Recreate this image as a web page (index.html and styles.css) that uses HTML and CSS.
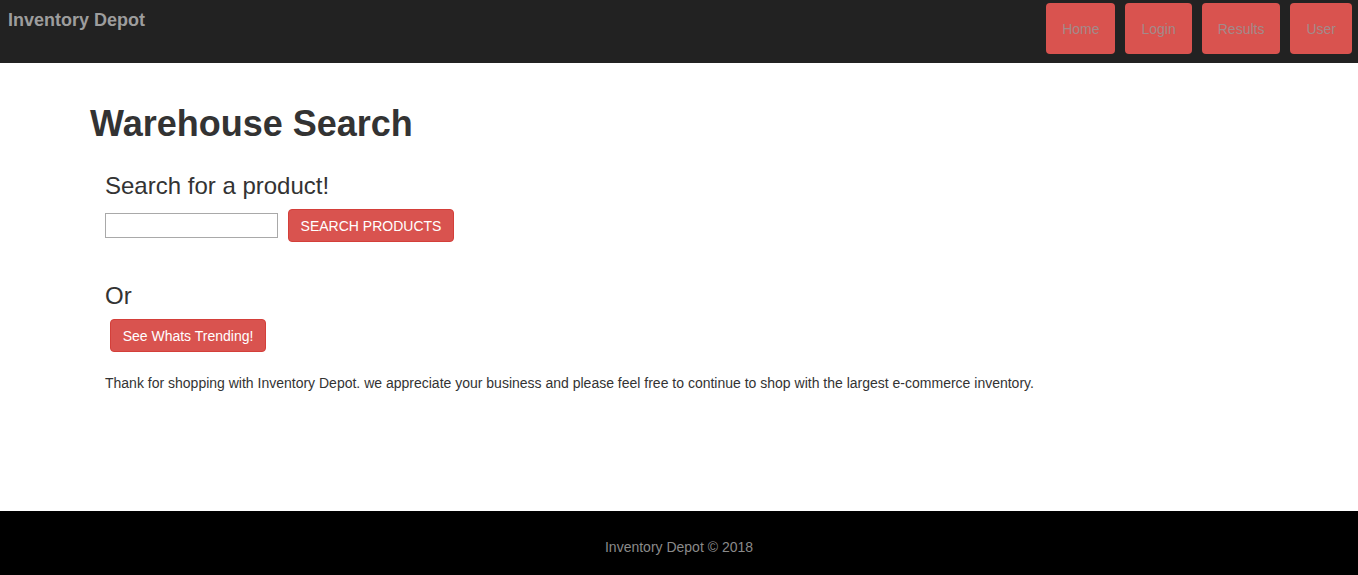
FILE: index.html
```html
<!DOCTYPE html>
<html>
<head>
<meta charset="utf-8">
<title>Inventory Depot</title>
<link rel="stylesheet" href="styles.css">
</head>
<body>
<header class="navbar">
  <a class="brand" href="#">Inventory Depot</a>
  <nav class="nav">
    <a class="nav-btn" href="#">Home</a>
    <a class="nav-btn" href="#">Login</a>
    <a class="nav-btn" href="#">Results</a>
    <a class="nav-btn" href="#">User</a>
  </nav>
</header>
<main class="main">
  <h1 class="title">Warehouse Search</h1>
  <section class="panel">
    <h3 class="sub">Search for a product!</h3>
    <div class="search-row">
      <input class="search-input" type="text">
      <button class="btn btn-upper">Search Products</button>
    </div>
    <h3 class="sub or">Or</h3>
    <button class="btn trend">See Whats Trending!</button>
    <p class="note">Thank for shopping with Inventory Depot. we appreciate your business and please feel free to continue to shop with the largest e-commerce inventory.</p>
  </section>
</main>
<footer class="footer">Inventory Depot © 2018</footer>
</body>
</html>
```

FILE: styles.css
```css
* { box-sizing: border-box; }
html, body { margin: 0; padding: 0; }
body {
  font-family: "Liberation Sans", Arial, Helvetica, sans-serif;
  font-size: 14px;
  line-height: 20px;
  color: #333;
  background: #fff;
  min-height: 575px;
  display: flex;
  flex-direction: column;
}
.navbar {
  height: 63px;
  background: #222;
  display: flex;
  justify-content: space-between;
  align-items: flex-start;
  padding-right: 6px;
}
.brand {
  color: #9d9d9d;
  font-size: 18px;
  font-weight: bold;
  line-height: 20px;
  text-decoration: none;
  padding: 10px 0 0 8px;
}
.nav { display: flex; gap: 10px; margin-top: 3px; }
.nav-btn {
  display: flex;
  align-items: center;
  height: 51px;
  padding: 1px 16px 0;
  background: #d9534f;
  border-radius: 4px;
  color: #a38a8a;
  text-decoration: none;
  font-size: 14px;
}
.main { flex: 1; padding: 0 90px; }
.title {
  font-size: 36px;
  line-height: 40px;
  font-weight: bold;
  margin: 41px 0 0;
  color: #333;
}
.panel { padding-left: 15px; }
.sub {
  font-size: 24px;
  line-height: 26px;
  font-weight: normal;
  margin: 29px 0 0;
  color: #333;
}
.search-row { display: flex; align-items: center; gap: 10px; margin-top: 10px; height: 33px; }
.search-input {
  width: 173px;
  height: 25px;
  border: 1px solid #a9a9a9;
  margin-top: -1px;
  padding: 1px 2px;
}
.btn {
  font-family: inherit;
  font-size: 14px;
  line-height: 20px;
  color: #fff;
  background: #d9534f;
  border: 1px solid #d43f3a;
  border-radius: 4px;
  padding: 6px 12px;
  height: 33px;
}
.btn-upper { text-transform: uppercase; width: 166px; padding: 6px 0; }
.or { margin-top: 41px; }
.trend { margin: 10px 0 0 5px; width: 156px; padding: 6px 0; }
.note { margin: 21px 0 0; }
.footer {
  height: 64px;
  background: #000;
  color: #8a8a8a;
  text-align: center;
  padding-top: 26px;
}
```
